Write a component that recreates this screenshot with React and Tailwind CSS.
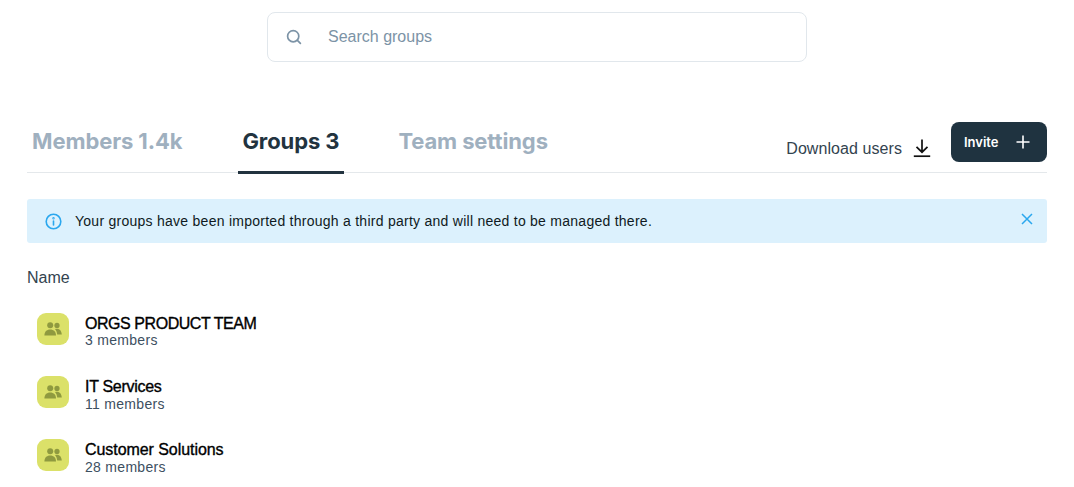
import React from "react";

function GroupIcon() {
  return (
    <svg width="18" height="14" viewBox="0 0 18 14" fill="#8f9a3f" aria-hidden="true">
      <circle cx="6.2" cy="3.2" r="3" />
      <circle cx="13" cy="3.4" r="2.6" />
      <path d="M0.4 13.4 C0.4 9.6 2.6 7.4 6.2 7.4 C9.8 7.4 12 9.6 12 13.4 Z" />
      <path d="M11 7 C11.7 6.8 12.4 6.8 13 6.8 C15.8 6.8 17.6 9 17.8 12.6 L13.2 12.6 C13 10.2 12.3 8.4 11 7 Z" />
    </svg>
  );
}

function Row({ name, count, tracking, countLeading }) {
  return (
    <div className="flex items-start h-[63px] pl-[10px]">
      <div className="w-8 h-8 rounded-[9px] bg-[#dbe169] flex items-center justify-center shrink-0">
        <GroupIcon />
      </div>
      <div className="ml-4 mt-[2px]">
        <div className={"font-['Liberation_Sans',sans-serif] text-[16px] leading-[17px] text-black [-webkit-text-stroke:0.35px_#000] " + tracking}>{name}</div>
        <div className={"font-['Liberation_Sans',sans-serif] text-[14px] tracking-[0.3px] text-[#3d4f5f] " + countLeading}>{count}</div>
      </div>
    </div>
  );
}

export default function App() {
  return (
    <div className="w-[1074px] h-[487px] overflow-hidden bg-white font-['Inter',sans-serif] text-[#1f3340]">
      <div className="pt-3 flex justify-center">
        <div className="w-[540px] h-[50px] border border-[#e1e7ec] rounded-lg flex items-center pl-[17px]">
          <svg width="18" height="18" viewBox="0 0 18 18" fill="none" stroke="#7c93a6" strokeWidth="1.7" strokeLinecap="round">
            <circle cx="8.2" cy="8.2" r="5.6" />
            <path d="M12.4 12.4 L15.4 15.4" />
          </svg>
          <span className="ml-[25px] font-['Liberation_Sans',sans-serif] text-[16px] text-[#7c93a6]">Search groups</span>
        </div>
      </div>

      <div className="mx-[27px] mt-[60px] h-[51px] border-b border-[#e4e8eb] flex justify-between">
        <div className="flex">
          <div className="h-[52px] px-[5px] pt-[5px] mr-[51px] text-[22px] leading-[28px] font-bold tracking-[-0.1px] text-[#9fb0bf]">Members 1.4k</div>
          <div className="h-[52px] w-[106px] pl-[4px] pt-[5px] mr-[50px] text-[22px] leading-[28px] font-bold tracking-[-0.1px] text-[#22333f] border-b-[3px] border-[#22333f]">Groups 3</div>
          <div className="h-[52px] pl-[4px] pt-[5px] text-[22px] leading-[28px] font-bold tracking-[-0.12px] text-[#9fb0bf]">Team settings</div>
        </div>
        <div className="flex items-start">
          <div className="flex items-center h-[40px] mt-[6px]">
            <span className="font-['Liberation_Sans',sans-serif] text-[16px] tracking-[0.07px] pt-[1px] text-[#33434f]">Download users</span>
            <svg className="ml-[11px]" width="18" height="20" viewBox="0 0 18 20" fill="none" stroke="#111" strokeWidth="1.7">
              <path d="M9 1.5 V14 M3.5 8.8 L9 14.2 L14.5 8.8" />
              <path d="M0.8 18.2 H17.2" />
            </svg>
          </div>
          <div className="ml-[20px] w-[96px] h-[40px] rounded-lg bg-[#1f3340] flex items-center pl-[13px] text-white">
            <span className="text-[13px] font-semibold pt-[1px]">Invite</span>
            <svg className="ml-[17px]" width="14" height="14" viewBox="0 0 14 14" fill="none" stroke="#fff" strokeWidth="1.6">
              <path d="M7 0.5 V13.5 M0.5 7 H13.5" />
            </svg>
          </div>
        </div>
      </div>

      <div className="mx-[27px] mt-[26px] h-[44px] bg-[#dcf1fd] rounded-[3px] flex items-center pl-[18px] pr-[14px]">
        <svg width="17" height="17" viewBox="0 0 17 17" fill="none" stroke="#2aa7ee" strokeWidth="1.6" strokeLinecap="round">
          <circle cx="8.5" cy="8.5" r="7.3" />
          <path d="M8.5 8 V12" />
          <circle cx="8.5" cy="5.2" r="0.4" />
        </svg>
        <span className="ml-[13px] font-['Liberation_Sans',sans-serif] text-[14px] tracking-[0.26px] text-[#0f1a22]">Your groups have been imported through a third party and will need to be managed there.</span>
        <svg className="ml-auto -mt-[4px]" width="12" height="12" viewBox="0 0 12 12" fill="none" stroke="#2aa7ee" strokeWidth="1.5">
          <path d="M1 1 L11 11 M11 1 L1 11" />
        </svg>
      </div>

      <div className="mx-[27px] mt-[25px] font-['Liberation_Sans',sans-serif] text-[16px] leading-[20px] text-[#33434f]">Name</div>

      <div className="mx-[27px] mt-[25px]">
        <Row name="ORGS PRODUCT TEAM" count="3 members" tracking="tracking-[-0.45px]" countLeading="leading-[17px]" />
        <Row name="IT Services" count="11 members" tracking="tracking-[-0.3px]" countLeading="leading-[19px]" />
        <Row name="Customer Solutions" count="28 members" tracking="tracking-[-0.06px]" countLeading="leading-[19px]" />
      </div>
    </div>
  );
}
